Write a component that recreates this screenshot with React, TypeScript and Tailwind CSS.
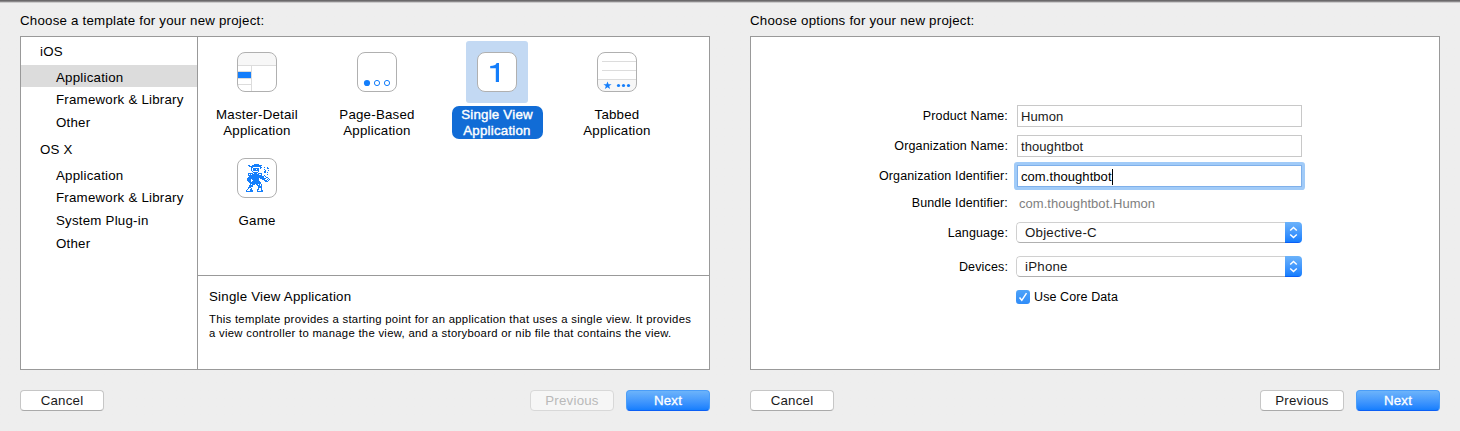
import type { ReactNode } from "react";

const SPRITE = [
  "........XXXXX...........",
  "..XX..XXXXXXXXXX........",
  "...XXXXXXXXXXXX.........",
  ".....XX.......XX..X..X..",
  ".....X.XXXXXX.X......XX.",
  ".....X.XXX.XX.....X.....",
  ".....X.XXXXXX......X..X.",
  "......X.....X.....XX....",
  ".......XXXXX......XX.X..",
  "..XXXXX.XXX.XXXX........",
  "..X.X.XXXXXXX..X.....X..",
  "..XXXXXXXXXXXXXX..X.....",
  "...XXXXXXXXXXXXXXX.X....",
  "..XXXXXXXXXXXXXXXX..XX..",
  ".XXXXXXXXXXXX.XXXXXX..X.",
  ".XXXX.XXXXXXX...XXX..X.X",
  ".XXXX..XXXXXX.....XXX.X.",
  "..XXX.XXXXXXXX.....XXX..",
  "...XXXXXXXXXXXX.........",
  "....XXXXXXXXXXX.........",
  "....X.XXX.XX.X.X........",
  "...XXXX....XXX.X........",
  "...XXXX.....XXXX........",
  "..XXX.......XXXX........",
  "..X..X......X..X........",
  ".X..XX.....XX..X........",
  "X...XXX....X...XX.......",
  "XXXXXXX....XXXXXX.......",
];

function Tile({ children }: { children?: ReactNode }) {
  return (
    <svg width="40" height="40" viewBox="0 0 40 40" className="block shrink-0">
      <rect x="0.5" y="0.5" width="39" height="39" rx="7.5" fill="#fff" />
      {children}
      <rect x="0.5" y="0.5" width="39" height="39" rx="7.5" fill="none" stroke="#b0b0b0" />
    </svg>
  );
}

function MasterDetailIcon() {
  return (
    <Tile>
      <path d="M1 14V8a7 7 0 0 1 7-7h24a7 7 0 0 1 7 7v6z" fill="#f7f7f7" />
      <path d="M1 13.5h38M14.5 14v25M1 19.5h13M1 26.5h13M1 32.5h13" stroke="#dcdcdc" fill="none" />
      <rect x="1" y="20" width="13" height="6" fill="#147efb" />
    </Tile>
  );
}

function PageIcon() {
  return (
    <Tile>
      <circle cx="10" cy="31" r="3.1" fill="#147efb" />
      <circle cx="20" cy="31" r="2.6" fill="none" stroke="#147efb" />
      <circle cx="30" cy="31" r="2.6" fill="none" stroke="#147efb" />
    </Tile>
  );
}

function SingleIcon() {
  return (
    <Tile>
      <path d="M19.6 11H22v19h-3.200V16.200h-5.600V14c3.200 0 5.700-.8 6.400-3z" fill="#147efb" />
    </Tile>
  );
}

function TabbedIcon() {
  return (
    <Tile>
      <path d="M1 28h38v4a7 7 0 0 1-7 7H8a7 7 0 0 1-7-7z" fill="#f7f7f7" />
      <path d="M5 9.5h34M5 18.5h34M1 27.5h38" stroke="#dcdcdc" fill="none" />
      <path d="M10.500 29.500l1.100 2.700h3l-2.400 1.900.9 2.900-2.600-1.700L7.900 37l.9-2.900-2.400-1.900h3z" fill="#147efb" />
      <circle cx="21.500" cy="33.500" r="1.600" fill="#147efb" />
      <circle cx="26.500" cy="33.500" r="1.600" fill="#147efb" />
      <circle cx="31.500" cy="33.500" r="1.600" fill="#147efb" />
    </Tile>
  );
}

function GameIcon() {
  return (
    <Tile>
      {SPRITE.flatMap((row, y) =>
        [...row].map((c, x) =>
          c === "X" ? <rect key={`${x}-${y}`} x={9 + x} y={6 + y} width="1" height="1" fill="#147efb" /> : null,
        ),
      )}
    </Tile>
  );
}

function Item({ icon, label, selected = false }: { icon: ReactNode; label: ReactNode; selected?: boolean }) {
  return (
    <div className="flex h-[106px] w-[120px] flex-col items-center">
      <div className={`flex size-[62px] items-center justify-center rounded-[3px] ${selected ? "bg-[#c3d9f3]" : ""}`}>
        {icon}
      </div>
      <div
        className={`mt-[3px] w-[91px] rounded-[7px] pt-px text-center leading-4 whitespace-nowrap ${
          selected ? "bg-[#116cd6] text-white [-webkit-text-stroke:0.4px_white]" : ""
        }`}
      >
        {label}
      </div>
    </div>
  );
}

function Button({ children, kind = "plain" }: { children: ReactNode; kind?: "plain" | "primary" | "disabled" }) {
  const look = {
    plain: "border-[#c6c6c6] border-b-[#aaaaaa] bg-white text-[#1a1a1a]",
    primary:
      "border-[#4a9df8] border-b-[#0b5ff5] bg-linear-to-b from-[#6cb3fa] to-[#147efe] text-white [-webkit-text-stroke:0.3px_white]",
    disabled: "border-[#d8d8d8] bg-[#f6f6f6] text-[#b9b9b9]",
  }[kind];
  return (
    <button className={`flex h-[21px] w-[84px] items-center justify-center rounded-[4px] border ${look}`}>
      {children}
    </button>
  );
}

function Field({ label, children, className }: { label: string; children: ReactNode; className: string }) {
  return (
    <div className={`flex items-center ${className}`}>
      <div className="mr-2 w-[257px] pt-px text-right text-[12.5px] tracking-[0.14px]">{label}</div>
      {children}
    </div>
  );
}

function Select({ children }: { children: ReactNode }) {
  return (
    <div className="flex h-[21px] w-[286px] overflow-hidden rounded-[4px]">
      <div className="flex flex-1 items-center rounded-l-[4px] border border-r-0 border-[#d0d0d0] border-b-[#b0b0b0] pl-2 text-[#1a1a1a]">
        {children}
      </div>
      <div className="flex w-[17px] items-center justify-center border-b border-[#0b5ff5] bg-linear-to-b from-[#6cb3fa] to-[#147efe]">
        <svg width="9" height="13" viewBox="0 0 9 13" fill="none" stroke="#fff" strokeWidth="1.500">
          <path d="M1.200 4.500L4.500 1.500l3.300 3M1.200 8.500l3.300 3 3.300-3" />
        </svg>
      </div>
    </div>
  );
}

function Input({ children, focused = false }: { children: ReactNode; focused?: boolean }) {
  return (
    <div className={`ml-px rounded-[1px] ${focused ? "shadow-[0_0_0_3px_#a1cbf8]" : ""}`}>
      <div
        className={`flex h-[22px] w-[285px] items-center border bg-white pt-px pl-[3px] text-[13px] tracking-[0.07px] ${
          focused ? "border-[#7fb0ea]" : "border-[#c8c8c8] text-[#1a1a1a]"
        }`}
      >
        {children}
        {focused && <span className="h-4 w-px bg-black" />}
      </div>
    </div>
  );
}

function SideRow({ children, className }: { children: ReactNode; className: string }) {
  return <div className={`flex items-center ${className}`}>{children}</div>;
}

export default function App() {
  return (
    <div className="flex h-[431px] w-[1460px] gap-10 bg-[#eeeeee] bg-linear-to-b from-[#6b696b] from-[1px] to-[#eeeeee] to-[3px] px-5 pt-[2px] font-['Liberation_Sans',sans-serif] text-[13.3px] tracking-[0.22px] text-black">
      <section className="flex w-[690px] flex-col">
        <h1 className="flex h-[34px] items-center pt-[3px]">Choose a template for your new project:</h1>
        <div className="flex h-[334px] border border-[#999999] bg-white">
          <nav className="w-[177px] border-r border-[#999999]">
            <SideRow className="h-7 pt-px pl-[19px]">iOS</SideRow>
            <SideRow className="h-[22px] bg-[#dcdcdc] pt-[3px] pl-[35px]">Application</SideRow>
            <SideRow className="h-6 pt-px pl-[35px]">Framework &amp; Library</SideRow>
            <SideRow className="h-[22px] pt-[2px] pl-[35px]">Other</SideRow>
            <SideRow className="h-8 pt-[2px] pl-[19px]">OS X</SideRow>
            <SideRow className="h-[21px] pl-[35px]">Application</SideRow>
            <SideRow className="h-6 pl-[35px]">Framework &amp; Library</SideRow>
            <SideRow className="h-[22px] pl-[35px]">System Plug-in</SideRow>
            <SideRow className="h-6 pl-[35px]">Other</SideRow>
          </nav>
          <div className="flex flex-1 flex-col">
            <div className="h-[239px] border-b border-[#999999] pt-1">
              <div className="-ml-px flex w-[480px] flex-wrap content-start">
                <Item icon={<MasterDetailIcon />} label={<>Master-Detail<br />Application</>} />
                <Item icon={<PageIcon />} label={<>Page-Based<br />Application</>} />
                <Item selected icon={<SingleIcon />} label={<>Single View<br />Application</>} />
                <Item icon={<TabbedIcon />} label={<>Tabbed<br />Application</>} />
                <Item icon={<GameIcon />} label="Game" />
              </div>
            </div>
            <div className="pt-3 pl-[11px]">
              <h2 className="leading-[18px]">Single View Application</h2>
              <p className="mt-[6px] text-[11.3px] leading-[14px] tracking-[0.29px] whitespace-nowrap">
                This template provides a starting point for an application that uses a single view. It provides
                <br />a view controller to manage the view, and a storyboard or nib file that contains the view.
              </p>
            </div>
          </div>
        </div>
        <div className="mt-5 flex gap-3">
          <Button>Cancel</Button>
          <div className="flex-1" />
          <Button kind="disabled">Previous</Button>
          <Button kind="primary">Next</Button>
        </div>
      </section>
      <section className="flex w-[690px] flex-col">
        <h1 className="flex h-[34px] items-center pt-[3px]">Choose options for your new project:</h1>
        <div className="flex h-[334px] flex-col border border-[#999999] bg-white pt-[68px]">
          <Field label="Product Name:" className="h-[22px]"><Input>Humon</Input></Field>
          <Field label="Organization Name:" className="mt-2 h-[22px]"><Input>thoughtbot</Input></Field>
          <Field label="Organization Identifier:" className="mt-2 h-[22px]"><Input focused>com.thoughtbot</Input></Field>
          <Field label="Bundle Identifier:" className="mt-[6px] h-5">
            <span className="ml-[3px] pt-px text-[13px] tracking-[0.05px] text-[#808080]">com.thoughtbot.Humon</span>
          </Field>
          <Field label="Language:" className="mt-[9px] h-[21px]"><Select>Objective-C</Select></Field>
          <Field label="Devices:" className="mt-[13px] h-[21px]"><Select>iPhone</Select></Field>
          <div className="mt-[13px] ml-[265px] flex h-[14px] items-center">
            <span className="flex size-[14px] items-center justify-center rounded-[3px] bg-linear-to-b from-[#4ea3f9] to-[#2f8cf8]">
              <svg width="10" height="10" viewBox="0 0 10 10" fill="none" stroke="#fff" strokeWidth="1.500">
                <path d="M1.500 5.500l2.300 2.800L8.500 1.200" />
              </svg>
            </span>
            <span className="ml-1 text-[12.5px] tracking-[0.1px]">Use Core Data</span>
          </div>
        </div>
        <div className="mt-5 flex gap-3">
          <Button>Cancel</Button>
          <div className="flex-1" />
          <Button>Previous</Button>
          <Button kind="primary">Next</Button>
        </div>
      </section>
    </div>
  );
}
